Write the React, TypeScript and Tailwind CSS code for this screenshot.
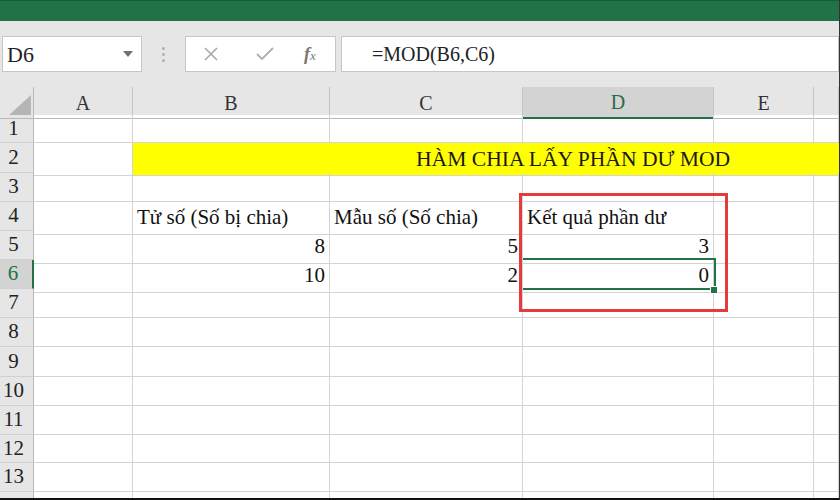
import React from "react";

const cols = "grid grid-cols-[34px_99px_197px_193px_191px_100px_1fr]";
const heights = [28, 30, 29, 29, 29, 29, 29, 29, 30, 29, 29, 28, 29];

type Cell = { text?: string; right?: boolean };

const data: Record<number, Cell[]> = {
  4: [{}, { text: "Tử số (Số bị chia)" }, { text: "Mẫu số (Số chia)" }, { text: "Kết quả phần dư" }, {}, {}],
  5: [{}, { text: "8", right: true }, { text: "5", right: true }, { text: "3", right: true }, {}, {}],
  6: [{}, { text: "10", right: true }, { text: "2", right: true }, { text: "0", right: true }, {}, {}],
};

function RowHeader({ n, h }: { n?: number; h: number }) {
  const sel = n === 6;
  return (
    <div
      style={{ height: h }}
      className={`flex items-center justify-center pr-[6px] text-[21px] border-b border-[#d0d0d0] ${
        sel ? "bg-[#d3d3d3] text-[#217346] border-r-2 border-r-[#217346]" : "bg-[#e6e6e6] text-[#222] border-r border-r-[#b8b8b8]"
      }`}
    >
      {n}
    </div>
  );
}

function Row({ n, h }: { n?: number; h: number }) {
  if (n === 2) {
    return (
      <div className={cols}>
        <RowHeader n={n} h={h} />
        <div className="border-r border-b border-[#d4d4d4]" />
        <div className="col-span-5 bg-[#ffff00] border-b border-[#d4d4d4] flex items-center pl-[283px] text-[21.6px] text-[#1a1a1a] whitespace-nowrap">
          HÀM CHIA LẤY PHẦN DƯ MOD
        </div>
      </div>
    );
  }
  const cells = (n && data[n]) || [{}, {}, {}, {}, {}, {}];
  return (
    <div className={cols}>
      <RowHeader n={n} h={h} />
      {cells.map((c, i) => (
        <div
          key={i}
          className={`flex items-center border-r border-b border-[#d4d4d4] px-[4px] text-[21px] text-[#111] whitespace-nowrap ${
            c.right ? "justify-end" : "justify-start"
          }`}
        >
          {c.text}
        </div>
      ))}
    </div>
  );
}

export default function App() {
  const headers = ["A", "B", "C", "D", "E", ""];
  return (
    <div className="relative w-[840px] h-[500px] overflow-hidden bg-white border-b-2 border-b-[#111] border-r border-r-[#333] font-[family-name:'Liberation_Serif','Times_New_Roman',serif]">
      {/* title bar */}
      <div className="h-[21px] bg-[#217346] border-t border-t-[#1b5a37]" />

      {/* formula bar */}
      <div className="h-[66px] bg-[#e6e6e6] pt-[15px] flex items-start">
        <div className="ml-[2px] w-[140px] h-[36px] bg-white border border-[#c6c6c6] flex items-center justify-between pl-[4px] pr-[8px]">
          <span className="text-[22px] text-[#222]">D6</span>
          <svg width="10" height="6" viewBox="0 0 10 6">
            <path d="M0 0h10L5 6z" fill="#707070" />
          </svg>
        </div>
        <div className="w-[43px] h-[36px] flex flex-col items-center justify-center gap-[3px]">
          <span className="w-[3px] h-[3px] rounded-full bg-[#b0b0b0]" />
          <span className="w-[3px] h-[3px] rounded-full bg-[#b0b0b0]" />
          <span className="w-[3px] h-[3px] rounded-full bg-[#b0b0b0]" />
        </div>
        <div className="w-[151px] h-[36px] bg-white border border-[#c6c6c6] flex items-center pl-[17px]">
          <svg width="16" height="16" viewBox="0 0 16 16" className="mr-[37px]">
            <path d="M2 2l12 12M14 2L2 14" stroke="#a8a8a8" strokeWidth="1.6" />
          </svg>
          <svg width="18" height="14" viewBox="0 0 18 14" className="mr-[30px]">
            <path d="M1 7l5 5L17 1" stroke="#b0b0b0" strokeWidth="1.8" fill="none" />
          </svg>
          <span className="italic font-bold text-[18px] text-[#777] leading-none">
            f<span className="text-[13px] font-normal">x</span>
          </span>
        </div>
        <div className="ml-[5px] flex-1 h-[36px] bg-white border border-[#c6c6c6] flex items-center pl-[30px] text-[20px] text-[#222]">
          =MOD(B6,C6)
        </div>
      </div>

      {/* column headers */}
      <div className={`${cols} h-[28px] bg-[#e6e6e6]`}>
        <div className="relative border-r border-b border-[#b8b8b8]">
          <svg width="22" height="20" viewBox="0 0 22 20" className="absolute left-[9px] bottom-[3px]">
            <path d="M22 0v20H0z" fill="#b5b5b5" />
          </svg>
        </div>
        {headers.map((h, i) => (
          <div
            key={i}
            className={`flex items-center justify-center text-[20px] border-r border-[#c4c4c4] ${
              h === "D"
                ? "bg-[#d3d3d3] text-[#2a6b47] border-b-2 border-b-[#217346]"
                : "text-[#333] border-b border-b-[#b8b8b8]"
            }`}
          >
            {h}
          </div>
        ))}
      </div>

      {heights.map((h, i) => (
        <div key={i} style={{ height: h }}>
          <Row n={i + 1} h={h} />
        </div>
      ))}
      <div className="h-[8px] overflow-hidden">
        <Row h={8} />
      </div>

      {/* active cell D6 */}
      <div className="absolute left-[523px] top-[258px] w-[193px] h-[32px] border-t-2 border-r-2 border-b-2 border-[#217346]" />
      <div className="absolute left-[710px] top-[286px] w-[8px] h-[8px] bg-[#217346] border border-white" />

      {/* red highlight */}
      <div className="absolute left-[519px] top-[193px] w-[209px] h-[119px] border-[3px] border-[#e53b3b]" />
    </div>
  );
}
